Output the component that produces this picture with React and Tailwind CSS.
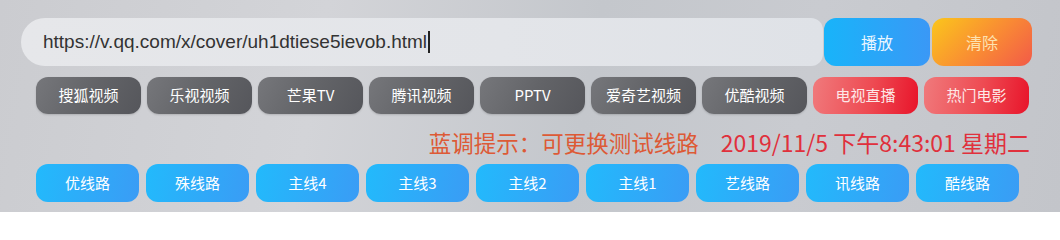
const sites = ['搜狐视频', '乐视视频', '芒果TV', '腾讯视频', 'PPTV', '爱奇艺视频', '优酷视频'];
const hot = ['电视直播', '热门电影'];
const lines = ['优线路', '殊线路', '主线4', '主线3', '主线2', '主线1', '艺线路', '讯线路', '酷线路'];

const cjk = "font-['Noto_Sans_CJK_SC',sans-serif]";

export default function App() {
	return (
		<div
			className={`w-[1060px] h-[212px] overflow-hidden pt-[18px] bg-[linear-gradient(100deg,#cbccd0_0%,#d3d4d8_30%,#c4c7cc_55%,#c9cbd0_75%,#c3c5ca_100%)] ${cjk}`}
		>
			<div className="flex ml-[21px] h-[48px]">
				<div className="w-[802px] h-full flex items-center pl-[22px] rounded-l-[24px] rounded-r-[12px] bg-[linear-gradient(90deg,#e6e7ea,#e3e5e9_60%,#dfe2e7)] text-[19px] text-[#333] font-['Liberation_Sans',sans-serif]">
					https://v.qq.com/x/cover/uh1dtiese5ievob.html
					<span className="inline-block w-[1.5px] h-[22px] bg-[#222] ml-[1px]" />
				</div>
				<button className="ml-[1px] w-[106px] h-full rounded-[12px] bg-[linear-gradient(90deg,#18b4fa,#3a98f6)] text-[#eaf6ff] text-[16px]">
					播放
				</button>
				<button className="ml-[2px] w-[100px] h-full rounded-[12px] bg-[linear-gradient(135deg,#fbc61c,#f98a34_55%,#f25a48)] text-[#fde2b0] text-[16px]">
					清除
				</button>
			</div>

			<div className="flex gap-[6px] ml-[36px] mt-[11px]">
				{sites.map((s) => (
					<div
						key={s}
						className="w-[105px] h-[37px] flex items-center justify-center rounded-[12px] bg-[linear-gradient(120deg,#76777b,#636468_50%,#55565b)] text-white text-[15px] shadow-[0_1px_2px_rgba(0,0,0,0.15)]"
					>
						{s}
					</div>
				))}
				{hot.map((s) => (
					<div
						key={s}
						className="w-[105px] h-[37px] flex items-center justify-center rounded-[12px] bg-[linear-gradient(100deg,#f07a7c,#ee4a52_55%,#e8142a)] text-[#fde8e8] text-[15px]"
					>
						{s}
					</div>
				))}
			</div>

			<div className="flex justify-end items-center h-[30px] mt-[13px] pr-[30px] leading-[30px]">
				<span className="text-[22.5px] text-[#dd5a36]">蓝调提示：可更换测试线路</span>
				<span className="ml-[22px] text-[23px] text-[#e0303c]">2019/11/5 下午8:43:01 星期二</span>
			</div>

			<div className="flex gap-[7px] ml-[36px] mt-[7px]">
				{lines.map((s) => (
					<div
						key={s}
						className="w-[103px] h-[38px] flex items-center justify-center rounded-[12px] bg-[linear-gradient(100deg,#22bafc,#3a9cf5)] text-white text-[15px]"
					>
						{s}
					</div>
				))}
			</div>
		</div>
	);
}
